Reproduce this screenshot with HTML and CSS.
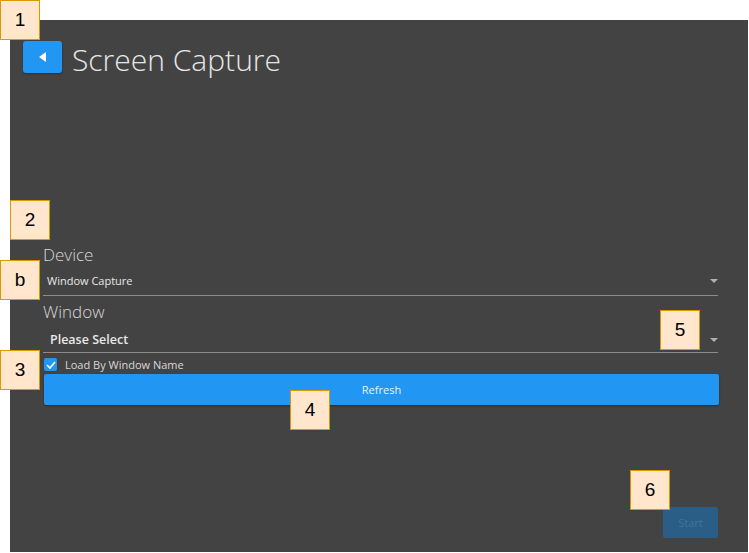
FILE: index.html
```html
<!DOCTYPE html>
<html lang="en">
<head>
    <meta charset="UTF-8">
    <meta name="viewport" content="width=device-width, initial-scale=1.0">
    <title>Screen Capture</title>
    <link rel="stylesheet" href="styles.css">
</head>
<body>
    <div class="app">
        <div class="header">
            <button class="back-btn" aria-label="Back">
                <svg width="8" height="10" viewBox="0 0 8 10"><polygon points="7,0 7,10 0,5" fill="#ffffff"/></svg>
            </button>
            <h1>Screen Capture</h1>
        </div>

        <div class="form">
            <div class="label device-label">Device</div>
            <div class="select device-select">
                <span>Window Capture</span>
                <span class="arrow"></span>
            </div>

            <div class="label window-label">Window</div>
            <div class="select window-select">
                <span>Please Select</span>
                <span class="arrow"></span>
            </div>

            <label class="check-row">
                <span class="checkbox">
                    <svg width="10" height="8" viewBox="0 0 10 8"><polyline points="1,4 4,7 9,1" fill="none" stroke="#ffffff" stroke-width="1.6"/></svg>
                </span>
                Load By Window Name
            </label>

            <button class="refresh-btn">Refresh</button>

            <div class="footer">
                <button class="start-btn" disabled>Start</button>
            </div>
        </div>
    </div>

    <!-- annotation markers -->
    <div class="marker m1">1</div>
    <div class="marker m2">2</div>
    <div class="marker mb">b</div>
    <div class="marker m3">3</div>
    <div class="marker m4">4</div>
    <div class="marker m5">5</div>
    <div class="marker m6">6</div>
</body>
</html>
```

FILE: styles.css
```css
body {
    margin: 0;
    background-color: #ffffff;
    font-family: 'Open Sans', 'Noto Sans', sans-serif;
    width: 749px;
    height: 553px;
    overflow: hidden;
    position: relative;
}

.app {
    margin: 20px 1px 0 10px;
    height: 532px;
    background-color: #434343;
    box-sizing: border-box;
    padding-top: 21px;
}

.header {
    display: flex;
    align-items: center;
    padding-left: 13px;
    height: 32px;
}

.back-btn {
    width: 39px;
    height: 32px;
    border: none;
    border-radius: 3px;
    background-color: #2196f3;
    display: flex;
    align-items: center;
    justify-content: center;
    padding: 0;
    box-shadow: 0 1px 2px rgba(0, 0, 0, 0.3);
}

h1 {
    margin: 0 0 0 10px;
    font-size: 30px;
    font-weight: 300;
    color: #e6e6e6;
    line-height: 32px;
    position: relative;
    top: 3px;
}

.form {
    padding: 0 30px 0 33px;
}

.label {
    font-size: 17px;
    font-weight: 300;
    color: #d8d8d8;
    line-height: 22px;
}

.device-label {
    margin-top: 171px;
}

.select {
    display: flex;
    align-items: center;
    justify-content: space-between;
    border-bottom: 1px solid #8c8c8c;
    color: #e8e8e8;
}

.device-select {
    height: 29px;
    padding-left: 4px;
    font-size: 11px;
}

.window-select {
    height: 30px;
    padding-left: 7px;
    padding-top: 4px;
    box-sizing: border-box;
    font-size: 12.5px;
    font-weight: 600;
}

.window-label {
    margin-top: 5px;
}

.arrow {
    width: 0;
    height: 0;
    border-left: 4px solid transparent;
    border-right: 4px solid transparent;
    border-top: 4px solid #b0b0b0;
}

.check-row {
    display: flex;
    align-items: center;
    height: 21px;
    padding-top: 2px;
    box-sizing: border-box;
    font-size: 11px;
    color: #d8d8d8;
}

.checkbox {
    width: 13px;
    height: 13px;
    margin-left: 1px;
    margin-right: 8px;
    border-radius: 2px;
    background-color: #2196f3;
    display: flex;
    align-items: center;
    justify-content: center;
}

.refresh-btn {
    display: block;
    width: 675px;
    height: 31px;
    margin-left: 1px;
    border: none;
    border-radius: 2px;
    background-color: #2196f3;
    color: #e8f2fc;
    font-family: inherit;
    font-size: 11px;
    box-shadow: 0 1px 2px rgba(0, 0, 0, 0.35);
}

.footer {
    display: flex;
    justify-content: flex-end;
    margin-top: 102px;
}

.start-btn {
    width: 55px;
    height: 31px;
    border: none;
    border-radius: 2px;
    background-color: #2b5e87;
    color: #46729a;
    font-family: inherit;
    font-size: 11px;
}

.marker {
    position: absolute;
    width: 38px;
    height: 38px;
    border: 1px solid #d79b00;
    background-color: #ffe6cc;
    color: #000000;
    font-family: 'Liberation Sans', Arial, sans-serif;
    font-size: 19px;
    display: flex;
    align-items: center;
    justify-content: center;
}

.m1 { left: 0; top: 0; }
.m2 { left: 10px; top: 200px; }
.mb { left: 0; top: 260px; }
.m3 { left: 0; top: 350px; }
.m4 { left: 290px; top: 390px; }
.m5 { left: 660px; top: 310px; }
.m6 { left: 630px; top: 470px; }
```
